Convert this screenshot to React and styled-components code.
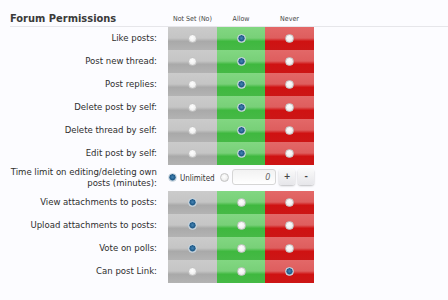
import React from "react";
import styled, { createGlobalStyle } from "styled-components";

const GlobalStyle = createGlobalStyle`
  html, body {
    margin: 0;
    padding: 0;
    background: #fcfcff;
  }
  body {
    font-family: "DejaVu Sans Condensed", "DejaVu Sans", sans-serif;
    color: #333;
  }
`;

const permissions = [
  { label: "Like posts:", value: 1 },
  { label: "Post new thread:", value: 1 },
  { label: "Post replies:", value: 1 },
  { label: "Delete post by self:", value: 1 },
  { label: "Delete thread by self:", value: 1 },
  { label: "Edit post by self:", value: 1 },
  { type: "time", label: ["Time limit on editing/deleting own", "posts (minutes):"] },
  { label: "View attachments to posts:", value: 0 },
  { label: "Upload attachments to posts:", value: 0 },
  { label: "Vote on polls:", value: 0 },
  { label: "Can post Link:", value: 2 }
];

const tones = [
  "linear-gradient(to bottom, #cbcbcb 0%, #c5c5c5 48%, #a9a9a9 62%, #b3b3b3 100%)",
  "linear-gradient(to bottom, #82d782 0%, #78d078 48%, #3fb83f 62%, #46b946 100%)",
  "linear-gradient(to bottom, #e36868 0%, #de5e5e 48%, #cf1212 62%, #cc1616 100%)"
];

const Radio = ({ checked }) => <RadioDot $checked={checked} />;

const PermissionRow = ({ row }) => {
  if (row.type === "time") {
    return (
      <Row>
        <Label $double>
          {row.label[0]}
          <br />
          {row.label[1]}
        </Label>
        <TimeControls>
          <Radio checked />
          <OptionText>Unlimited</OptionText>
          <Radio />
          <NumberBox>0</NumberBox>
          <SpinButton>+</SpinButton>
          <SpinButton>-</SpinButton>
        </TimeControls>
      </Row>
    );
  }
  return (
    <Row>
      <Label>{row.label}</Label>
      {tones.map((tone, i) => (
        <Cell key={i} $tone={tone}>
          <Radio checked={row.value === i} />
        </Cell>
      ))}
    </Row>
  );
};

const App = () => (
  <>
    <GlobalStyle />
    <Page>
      <Header>
        <Title>Forum Permissions</Title>
        <ColumnHead>Not Set (No)</ColumnHead>
        <ColumnHead>Allow</ColumnHead>
        <ColumnHead>Never</ColumnHead>
      </Header>
      <Table>
        {permissions.map((row, i) => (
          <PermissionRow key={i} row={row} />
        ))}
      </Table>
      <NextHeader>
        <Title>Forum Moderator Permissions</Title>
      </NextHeader>
    </Page>
  </>
);

const Page = styled.div`
  width: 448px;
  height: 300px;
  overflow: hidden;
  padding-top: 10px;
  box-sizing: border-box;
`;

const Header = styled.div`
  display: grid;
  grid-template-columns: 158px 49px 48px 49px;
  align-items: end;
  margin-left: 10px;
  height: 16px;
  border-bottom: 1px solid #e6e6ea;
`;

const Title = styled.div`
  font-family: "DejaVu Sans Condensed", "DejaVu Sans", sans-serif;
  font-weight: bold;
  font-size: 11px;
  color: #3a3a3a;
  line-height: 12px;
  padding-bottom: 1px;
`;

const ColumnHead = styled.div`
  font-size: 7px;
  color: #444;
  text-align: center;
  line-height: 10px;
  padding-bottom: 2px;
`;

const Table = styled.div`
  display: flex;
  flex-direction: column;
  margin-left: 10px;
`;

const Row = styled.div`
  display: grid;
  grid-template-columns: 158px 49px 48px 49px;
  min-height: 23px;
`;

const Label = styled.div`
  font-size: 9.5px;
  color: #2e2e2e;
  text-align: right;
  padding-right: 11px;
  display: flex;
  flex-direction: column;
  justify-content: ${p => (p.$double ? "flex-start" : "center")};
  align-items: flex-end;
  line-height: ${p => (p.$double ? "11px" : "14px")};
  padding-top: ${p => (p.$double ? "1px" : "0")};
  padding-bottom: ${p => (p.$double ? "0" : "2px")};
  height: ${p => (p.$double ? "26px" : "23px")};
  box-sizing: border-box;
  white-space: nowrap;
`;

const Cell = styled.div`
  background: ${p => p.$tone};
  display: flex;
  align-items: center;
  justify-content: center;
  padding-bottom: 1px;
  box-sizing: border-box;
`;

const RadioDot = styled.span`
  display: inline-block;
  width: 9px;
  height: 9px;
  border-radius: 50%;
  flex-shrink: 0;
  box-sizing: border-box;
  border: 1px solid ${p => (p.$checked ? "#c9d6e0" : "#c4c4c4")};
  background: ${p =>
    p.$checked
      ? "radial-gradient(circle at 50% 45%, #4585b6 0%, #1f5a88 50%, #b8c8d4 75%)"
      : "radial-gradient(circle at 45% 40%, #ffffff 0%, #f2f2f2 50%, #d4d4d4 100%)"};
`;

const TimeControls = styled.div`
  grid-column: 2 / span 3;
  display: flex;
  align-items: center;
  height: 26px;
  padding-bottom: 2px;
  box-sizing: border-box;
`;

const OptionText = styled.span`
  font-size: 8px;
  color: #333;
  white-space: nowrap;
  margin: 2px 5px 0 3px;
`;

const NumberBox = styled.div`
  width: 45px;
  height: 16px;
  box-sizing: border-box;
  margin-left: 3px;
  border: 1px solid #d6d6d6;
  border-radius: 3px;
  background: linear-gradient(to bottom, #f2f2f2, #ffffff);
  font-size: 9px;
  font-style: italic;
  color: #666;
  text-align: right;
  padding-right: 5px;
  line-height: 14px;
`;

const SpinButton = styled.div`
  width: 16px;
  height: 16px;
  margin-left: 3px;
  border-radius: 3px;
  background: linear-gradient(to bottom, #fafafa, #e6e6ea);
  box-shadow: 0 1px 2px rgba(0, 0, 0, 0.25);
  font-size: 9px;
  font-weight: bold;
  color: #444;
  text-align: center;
  line-height: 15px;
`;

const NextHeader = styled.div`
  margin: 17px 0 0 10px;
`;

export default App;
